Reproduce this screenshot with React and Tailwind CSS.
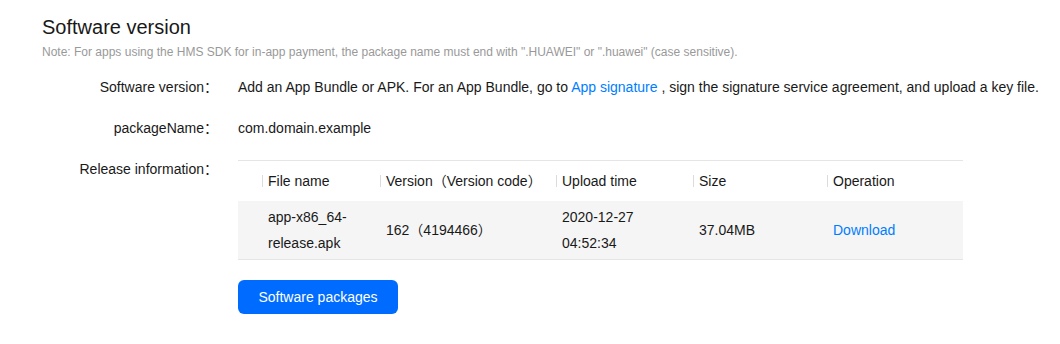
import React from 'react';

const COLS = [
  { key: 'file', title: 'File name', w: 'w-[118px]' },
  { key: 'version', title: 'Version（Version code）', w: 'w-[176px]' },
  { key: 'time', title: 'Upload time', w: 'w-[137px]' },
  { key: 'size', title: 'Size', w: 'w-[134px]' },
  { key: 'op', title: 'Operation', w: 'w-[136px]' },
];

function Row({ label, children }) {
  return (
    <div className="flex items-start">
      <div className="w-[176px] shrink-0 text-right text-[14px] leading-5 text-[#191919]">{label}：</div>
      <div className="ml-5 flex-1 text-[14px] leading-5 text-[#191919]">{children}</div>
    </div>
  );
}

export default function App() {
  return (
    <div className="min-h-[344px] bg-white pl-[42px] pt-[13px] font-['Liberation_Sans','Noto_Sans_CJK_SC',sans-serif] text-[#191919]">
      <h1 className="text-[20px] leading-7 text-[#191919]">Software version</h1>
      <p className="mt-[2px] text-[12px] leading-[18px] text-[#999999]">
        Note: For apps using the HMS SDK for in-app payment, the package name must end with ".HUAWEI" or ".huawei" (case sensitive).
      </p>

      <div className="mt-4 space-y-[21px]">
        <Row label="Software version">
          Add an App Bundle or APK. For an App Bundle, go to <span className="text-[#007dff]">App signature</span> , sign the signature service agreement, and upload a key file.
        </Row>
        <Row label="packageName">com.domain.example</Row>
        <Row label="Release information">
          <div className="mt-px w-[725px]">
            {/* Table */}
            <div className="border-t border-[#e5e5e5]">
              <div className="flex h-10 items-center pl-6">
                {COLS.map(c => (
                  <div key={c.key} className={`${c.w} flex items-center`}>
                    <span className="h-3 w-px bg-[#dcdcdc]" />
                    <span className="pl-[5px]">{c.title}</span>
                  </div>
                ))}
              </div>
              <div className="flex items-center border-b border-[#e5e5e5] bg-[#f5f5f5] py-[3px] pl-6 leading-[26px]">
                <div className="w-[118px] pl-[6px] pr-3">app-x86_64-<br />release.apk</div>
                <div className="w-[176px] pl-[6px]">162（4194466）</div>
                <div className="w-[137px] pl-[6px]">2020-12-27<br />04:52:34</div>
                <div className="w-[134px] pl-[6px]">37.04MB</div>
                <div className="w-[136px] pl-[6px] text-[#007dff]">Download</div>
              </div>
            </div>
            <button className="mt-5 h-[34px] w-[160px] rounded-md bg-[#006cff] text-[14px] text-white">
              Software packages
            </button>
          </div>
        </Row>
      </div>
    </div>
  );
}
